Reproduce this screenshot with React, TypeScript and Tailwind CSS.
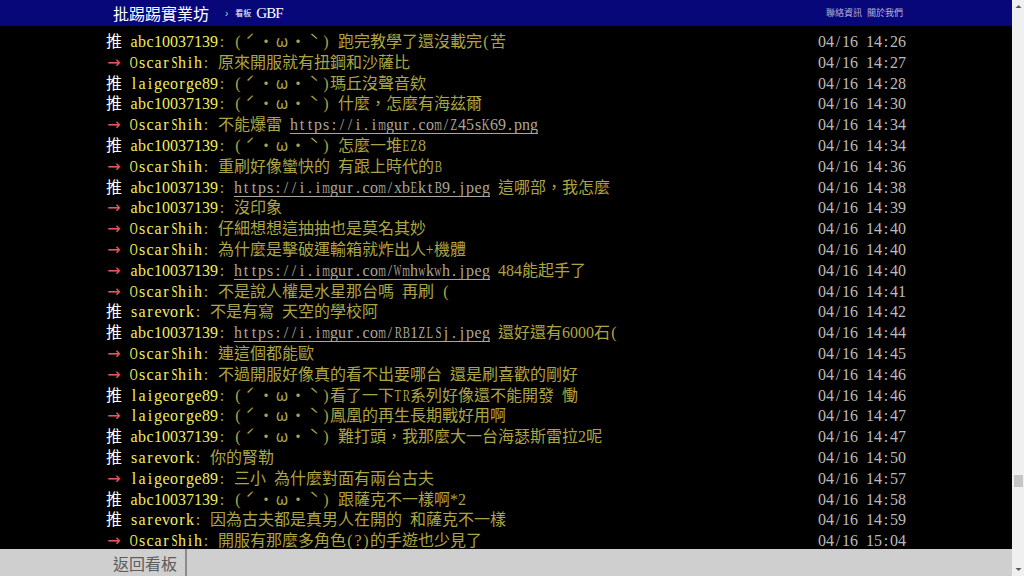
import React from 'react';

type Row = [tag: '推' | '→', user: string, content: string, time: string];

const ROWS: Row[] = [
  ['推', 'abc10037139', '(ˊ・ω・ˋ) 跑完教學了還沒載完(苦', '04/16 14:26'],
  ['→', 'OscarShih', '原來開服就有扭鋼和沙薩比', '04/16 14:27'],
  ['推', 'laigeorge89', '(ˊ・ω・ˋ)瑪丘沒聲音欸', '04/16 14:28'],
  ['推', 'abc10037139', '(ˊ・ω・ˋ) 什麼，怎麼有海茲爾', '04/16 14:30'],
  ['→', 'OscarShih', '不能爆雷 https://i.imgur.com/Z45sK69.png', '04/16 14:34'],
  ['推', 'abc10037139', '(ˊ・ω・ˋ) 怎麼一堆EZ8', '04/16 14:34'],
  ['→', 'OscarShih', '重刷好像蠻快的 有跟上時代的B', '04/16 14:36'],
  ['推', 'abc10037139', 'https://i.imgur.com/xbEktB9.jpeg 這哪部，我怎麼', '04/16 14:38'],
  ['→', 'abc10037139', '沒印象', '04/16 14:39'],
  ['→', 'OscarShih', '仔細想想這抽抽也是莫名其妙', '04/16 14:40'],
  ['→', 'OscarShih', '為什麼是擊破運輸箱就炸出人+機體', '04/16 14:40'],
  ['→', 'abc10037139', 'https://i.imgur.com/Wmhwkwh.jpeg 484能起手了', '04/16 14:40'],
  ['→', 'OscarShih', '不是說人權是水星那台嗎 再刷 (', '04/16 14:41'],
  ['推', 'sarevork', '不是有寫 天空的學校阿', '04/16 14:42'],
  ['推', 'abc10037139', 'https://i.imgur.com/RB1ZLSj.jpeg 還好還有6000石(', '04/16 14:44'],
  ['→', 'OscarShih', '連這個都能歐', '04/16 14:45'],
  ['→', 'OscarShih', '不過開服好像真的看不出要哪台 還是刷喜歡的剛好', '04/16 14:46'],
  ['推', 'laigeorge89', '(ˊ・ω・ˋ)看了一下TR系列好像還不能開發 慟', '04/16 14:46'],
  ['→', 'laigeorge89', '(ˊ・ω・ˋ)鳳凰的再生長期戰好用啊', '04/16 14:47'],
  ['推', 'abc10037139', '(ˊ・ω・ˋ) 難打頭，我那麼大一台海瑟斯雷拉2呢', '04/16 14:47'],
  ['推', 'sarevork', '你的腎勒', '04/16 14:50'],
  ['→', 'laigeorge89', '三小 為什麼對面有兩台古夫', '04/16 14:57'],
  ['推', 'abc10037139', '(ˊ・ω・ˋ) 跟薩克不一樣啊*2', '04/16 14:58'],
  ['推', 'sarevork', '因為古夫都是真男人在開的 和薩克不一樣', '04/16 14:59'],
  ['→', 'OscarShih', '開服有那麼多角色(?)的手遊也少見了', '04/16 15:04'],
];

// Squeeze serif glyphs wider than a half-width cell, like the condensed terminal font.
function squeezeOf(ch: string) {
  if (ch === 'M' || ch === 'W') return 'scale-x-[0.5]';
  if (ch === 'm' || ch === 'w') return 'scale-x-[0.62]';
  if (/[A-Z]/.test(ch)) return 'scale-x-[0.68]';
  if (ch === '+') return 'scale-x-[0.85]';
  return '';
}

// Terminal-style text: half-width cells are 8px, full-width cells 16px (like 細明體).
function Cells({ text, link = false }: { text: string; link?: boolean }) {
  return (
    <>
      {Array.from(text).map((ch, i) => {
        if (ch === '→') {
          return (
            <span key={i} className="inline-block w-4 text-center font-['DejaVu_Sans',sans-serif] leading-4">
              {ch}
            </span>
          );
        }
        const wide = ch.charCodeAt(0) > 0x7e;
        if (wide) {
          return (
            <span key={i} className="inline-block w-4 text-center font-['Noto_Sans_CJK_TC',sans-serif] leading-4">
              {ch}
            </span>
          );
        }
        return (
          <span
            key={i}
            className={`inline-flex w-2 justify-center font-['Liberation_Serif',serif] leading-4 ${link ? 'border-b border-current' : ''}`}
          >
            <span className={`inline-block ${squeezeOf(ch)}`}>{ch === ' ' ? '\u00a0' : ch}</span>
          </span>
        );
      })}
    </>
  );
}

function Content({ text }: { text: string }) {
  const parts = text.split(/(https:\/\/\S+)/);
  return (
    <>
      {parts.map((p, i) =>
        p.startsWith('https://') ? (
          <span key={i} className="text-[#aaa69c]"><Cells text={p} link /></span>
        ) : (
          <Cells key={i} text={p} />
        )
      )}
    </>
  );
}

export default function App() {
  return (
    <div className="flex h-[576px] w-[1024px] overflow-hidden bg-black">
      <div className="flex min-w-0 flex-1 flex-col">
        {/* top bar */}
        <div className="h-[26px] shrink-0 bg-[#07077a]">
          <div className="mx-auto flex h-full w-[800px] items-center pl-[7px] pr-[3px]">
            <span className="font-['Noto_Sans_CJK_TC',sans-serif] text-[16px] leading-none text-white">批踢踢實業坊</span>
            <span className="ml-[16px] font-['Liberation_Sans',sans-serif] text-[10px] text-[#c8c8e8]">›</span>
            <span className="ml-[7px] font-['Noto_Sans_CJK_TC',sans-serif] text-[8px] text-white">看板</span>
            <span className="ml-[5px] font-['Liberation_Serif',serif] text-[15px] tracking-[-1px] text-white">GBF</span>
            <div className="ml-auto flex gap-[5px] pl-[3px] font-['Noto_Sans_CJK_TC',sans-serif] text-[9px] text-[#b4b4dc]">
              <span>聯絡資訊</span>
              <span>關於我們</span>
            </div>
          </div>
        </div>

        {/* pushes */}
        <div className="min-h-0 flex-1 overflow-hidden pt-[5px]">
          <div className="mx-auto w-[800px] text-[16px] leading-[20.8px]">
            {ROWS.map(([tag, user, content, time], i) => (
              <div key={i} className="flex h-[20.8px] items-baseline whitespace-nowrap">
                <span className={tag === '推' ? 'text-white' : 'text-[#e85a5a]'}>
                  <Cells text={tag + ' '} />
                </span>
                <span className="text-[#eeee66]"><Cells text={user} /></span>
                <span className="text-[#aca444]">
                  <Cells text=": " />
                  <Content text={content} />
                </span>
                <span className="ml-auto text-[#bbbbbb]"><Cells text={time} /></span>
              </div>
            ))}
          </div>
        </div>

        {/* bottom nav */}
        <div className="h-[27px] shrink-0 bg-[#cfcfcf]">
          <div className="mx-auto flex h-full w-[800px]">
            <span className="flex items-center px-[7px] font-['Noto_Sans_CJK_TC',sans-serif] text-[16px] text-[#5c5c5c]">返回看板</span>
            <span className="ml-[1px] w-[2px] bg-[#8c8c8c]" />
          </div>
        </div>
      </div>

      {/* scrollbar */}
      <div className="flex w-[12px] shrink-0 flex-col items-center bg-[#f0f0f0]">
        <svg width="7" height="12" viewBox="0 0 7 12" className="mt-[1px]">
          <path d="M3.5 4 L6.5 7 L0.5 7 Z" fill="#5a5a5a" />
        </svg>
        <div className="flex-1" />
        <div className="mb-[76px] h-[12px] w-[9px] bg-[#c6c6c6]" />
        <svg width="7" height="12" viewBox="0 0 7 12" className="mb-[1px]">
          <path d="M0.5 5 L6.5 5 L3.5 8 Z" fill="#5a5a5a" />
        </svg>
      </div>
    </div>
  );
}
